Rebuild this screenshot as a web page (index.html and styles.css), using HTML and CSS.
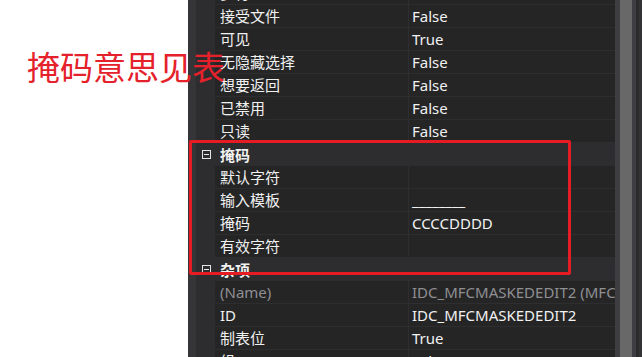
FILE: index.html
```html
<!DOCTYPE html>
<html lang="zh-CN">
    <head>
        <meta charset="UTF-8">
        <meta name="viewport" content="width=device-width, initial-scale=1.0">
        <title>属性</title>
        <link rel="stylesheet" href="styles.css">
    </head>
    <body>
        <div class="blank"></div>

        <div class="props">
            <div class="grid">
                <div class="row"><span class="gut"></span><span class="name">多行</span><span class="val"></span></div>
                <div class="row"><span class="gut"></span><span class="name">接受文件</span><span class="val">False</span></div>
                <div class="row"><span class="gut"></span><span class="name">可见</span><span class="val">True</span></div>
                <div class="row"><span class="gut"></span><span class="name">无隐藏选择</span><span class="val">False</span></div>
                <div class="row"><span class="gut"></span><span class="name">想要返回</span><span class="val">False</span></div>
                <div class="row"><span class="gut"></span><span class="name">已禁用</span><span class="val">False</span></div>
                <div class="row"><span class="gut"></span><span class="name">只读</span><span class="val">False</span></div>

                <div class="cat"><span class="box"></span><span>掩码</span></div>
                <div class="row"><span class="gut"></span><span class="name">默认字符</span><span class="val"></span></div>
                <div class="row"><span class="gut"></span><span class="name">输入模板</span><span class="val">________</span></div>
                <div class="row"><span class="gut"></span><span class="name">掩码</span><span class="val">CCCCDDDD</span></div>
                <div class="row"><span class="gut"></span><span class="name">有效字符</span><span class="val"></span></div>

                <div class="cat"><span class="box"></span><span>杂项</span></div>
                <div class="row dim"><span class="gut"></span><span class="name">(Name)</span><span class="val">IDC_MFCMASKEDEDIT2 (MFC MaskedEdit Control)</span></div>
                <div class="row"><span class="gut"></span><span class="name">ID</span><span class="val">IDC_MFCMASKEDEDIT2</span></div>
                <div class="row"><span class="gut"></span><span class="name">制表位</span><span class="val">True</span></div>
                <div class="row"><span class="gut"></span><span class="name">组</span><span class="val">False</span></div>
            </div>

            <div class="scroll">
                <span class="track"></span>
                <span class="thumb"></span>
                <span class="track narrow"></span>
                <span class="edge"></span>
            </div>
        </div>

        <!-- 标注 -->
        <div class="note">掩码意思见表</div>
        <div class="frame"></div>
    </body>
</html>
```

FILE: styles.css
```css
body {
    margin: 0;
    height: 357px;
    overflow: hidden;
    background-color: #ffffff;
    display: flex;
    font-family: "Noto Sans", "Noto Sans CJK SC", sans-serif;
    font-size: 15px;
    color: #f1f1f1;
}

.blank {
    width: 188px;
    flex-shrink: 0;
}

.props {
    flex: 1;
    display: flex;
    background-color: #252526;
    border-left: 8px solid #353538;
    overflow: hidden;
}

.grid {
    flex: 1;
    margin-top: -18px;
    overflow: hidden;
}

.row {
    display: grid;
    grid-template-columns: 19px 193px 1fr;
    height: 23px;
}

.gut {
    background-color: #2d2d30;
}

.name,
.val {
    line-height: 22px;
    border-bottom: 1px solid #2e2e31;
    white-space: nowrap;
    overflow: hidden;
}

.name {
    padding-left: 5px;
}

.val {
    border-left: 1px solid #2e2e31;
    padding-left: 3px;
}

.dim .name,
.dim .val {
    color: #8f8f92;
}

.cat {
    display: flex;
    align-items: center;
    height: 23px;
    background-color: #2d2d30;
    font-weight: bold;
}

.box {
    width: 7px;
    height: 7px;
    margin: 0 9px 0 6px;
    border: 1px solid #e6e6e6;
    position: relative;
}

.box::after {
    content: "";
    position: absolute;
    left: 1px;
    right: 1px;
    top: 3px;
    height: 1px;
    background-color: #e6e6e6;
}

.scroll {
    width: 27px;
    display: flex;
    flex-shrink: 0;
}

.track {
    width: 5px;
    background-color: #3e3e42;
}

.track.narrow {
    width: 4px;
}

.thumb {
    width: 12px;
    background-color: #686868;
}

.edge {
    width: 6px;
    background-color: #2d2d30;
    border-left: 2px solid #2a2a2c;
    box-sizing: border-box;
    box-shadow: inset -3px 0 0 #333336;
}

.note {
    position: absolute;
    left: 27px;
    top: 41px;
    font-family: "Noto Sans CJK SC", sans-serif;
    font-size: 33px;
    line-height: 50px;
    color: #e5212b;
}

.frame {
    position: absolute;
    left: 189px;
    top: 140px;
    width: 376px;
    height: 129px;
    border: 3px solid #e51c23;
    border-radius: 2px;
}
```
